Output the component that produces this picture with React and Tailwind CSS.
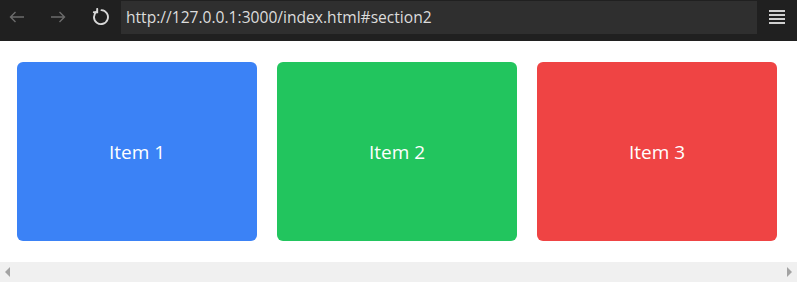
import React from "react";

const items = [
  { label: "Item 1", color: "bg-[#3b82f6]" },
  { label: "Item 2", color: "bg-[#22c55e]" },
  { label: "Item 3", color: "bg-[#ef4444]" },
];

function App() {
  return (
    <div className="w-[797px] h-[285px] bg-white overflow-hidden font-['Open_Sans',sans-serif]">
      {/* Browser bar */}
      <div className="h-[41px] bg-[#202020] flex items-start">
        <div className="flex items-center h-[34px] pl-[9px] gap-[25px]">
          <svg width="16" height="12" viewBox="0 0 16 12" fill="none" stroke="#6b6b6b" strokeWidth="1.4">
            <path d="M15 6H1.5M6.5 1L1.5 6l5 5" />
          </svg>
          <svg width="16" height="12" viewBox="0 0 16 12" fill="none" stroke="#6b6b6b" strokeWidth="1.4">
            <path d="M1 6h13.5M9.5 1l5 5-5 5" />
          </svg>
          <svg width="18" height="18" viewBox="0 0 18 18" fill="none" stroke="#d8d8d8" strokeWidth="1.9" strokeLinecap="round">
            <path d="M5.6 3.6A7 7 0 1 0 10.5 2.1" />
            <path d="M6.2 0.9v3.4H2.8" />
          </svg>
        </div>
        <div className="ml-[12px] mt-px w-[636px] h-[33px] bg-[#2f2f2f] flex items-center pl-[5px] text-[15.6px] text-[#dcdcdc]">
          http://127.0.0.1:3000/index.html#section2
        </div>
        <div className="ml-[12px] mt-[10px] flex flex-col gap-[2px] w-[16px]">
          <span className="block h-[2px] bg-[#d0d0d0]" />
          <span className="block h-[2px] bg-[#d0d0d0]" />
          <span className="block h-[2px] bg-[#d0d0d0]" />
          <span className="block h-[2px] bg-[#d0d0d0]" />
        </div>
      </div>

      {/* Content */}
      <div className="h-[221px] flex gap-[20px] pl-[17px] pt-[21px]">
        {items.map((item) => (
          <div
            key={item.label}
            className={`${item.color} w-[240px] h-[179px] shrink-0 rounded-md flex items-center justify-center pt-[2px] text-white text-[19px] font-medium`}
          >
            {item.label}
          </div>
        ))}
      </div>

      {/* Horizontal scrollbar */}
      <div className="h-[20px] bg-[#f0f0f0] flex items-center justify-between px-[5px]">
        <span className="w-0 h-0 border-y-[5px] border-y-transparent border-r-[5px] border-r-[#a3a3a3]" />
        <span className="w-0 h-0 border-y-[5px] border-y-transparent border-l-[5px] border-l-[#a3a3a3]" />
      </div>
    </div>
  );
}

export default App;
